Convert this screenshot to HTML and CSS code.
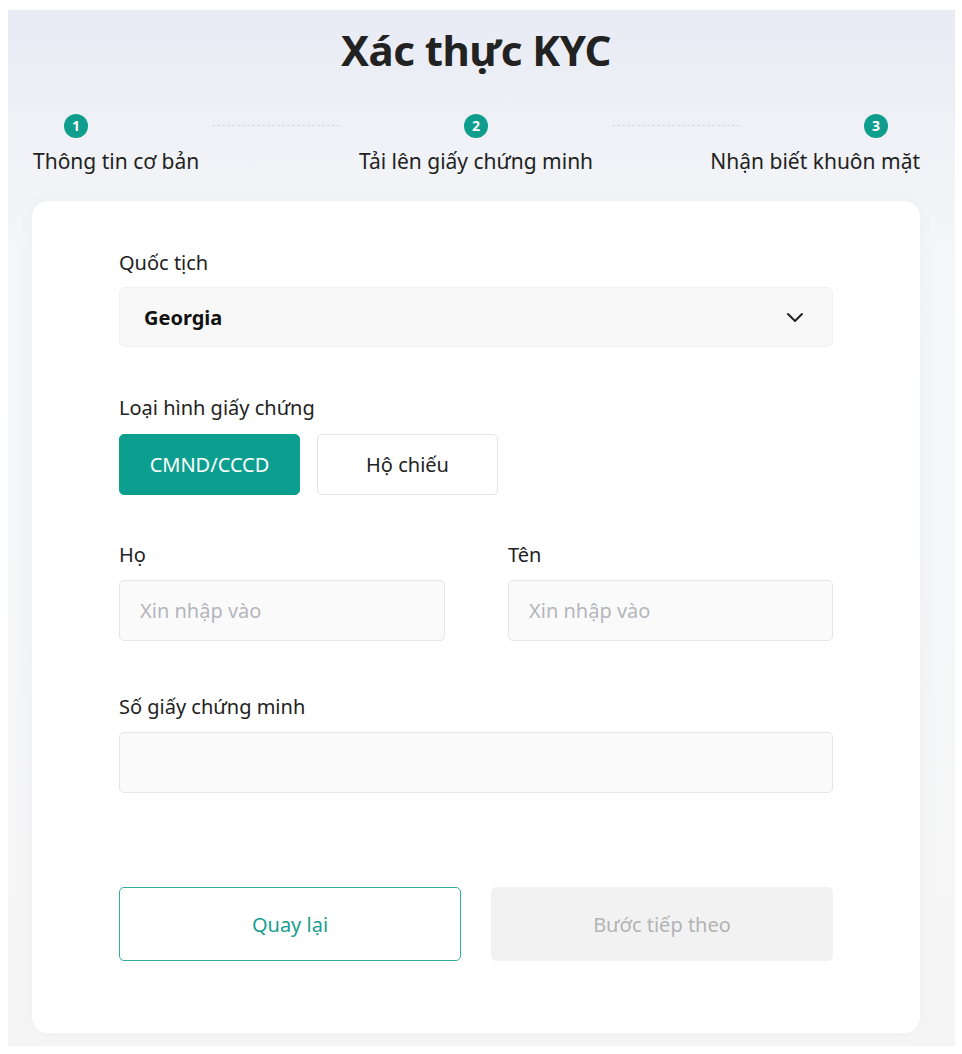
FILE: index.html
```
<!DOCTYPE html>
<html lang="vi">
<head>
<meta charset="utf-8">
<title>Xác thực KYC</title>
<link rel="stylesheet" href="styles.css">
</head>
<body>
<div class="page">
  <h1 class="title">Xác thực KYC</h1>
  <div class="steps">
    <div class="step-dots">
      <span class="dot">1</span>
      <span class="line"></span>
      <span class="dot">2</span>
      <span class="line"></span>
      <span class="dot">3</span>
    </div>
    <div class="step-labels">
      <span class="sl-first">Thông tin cơ bản</span>
      <span class="sl-mid">Tải lên giấy chứng minh</span>
      <span class="sl-last">Nhận biết khuôn mặt</span>
    </div>
  </div>
  <div class="card">
    <div class="field f-nation">
      <div class="label">Quốc tịch</div>
      <div class="select">
        <span class="select-value">Georgia</span>
        <svg class="chev" width="20" height="20" viewBox="0 0 20 20"><path d="M3 7l7 7 7-7" fill="none" stroke="#222" stroke-width="2" stroke-linecap="round" stroke-linejoin="round"/></svg>
      </div>
    </div>
    <div class="field f-type">
      <div class="label">Loại hình giấy chứng</div>
      <div class="types">
        <button class="type active">CMND/CCCD</button>
        <button class="type">Hộ chiếu</button>
      </div>
    </div>
    <div class="row f-name">
      <div class="field">
        <div class="label">Họ</div>
        <div class="input placeholder">Xin nhập vào</div>
      </div>
      <div class="field">
        <div class="label">Tên</div>
        <div class="input placeholder">Xin nhập vào</div>
      </div>
    </div>
    <div class="field f-id">
      <div class="label">Số giấy chứng minh</div>
      <div class="input"></div>
    </div>
    <div class="actions">
      <button class="btn back">Quay lại</button>
      <button class="btn next">Bước tiếp theo</button>
    </div>
  </div>
</div>
</body>
</html>
```
FILE: styles.css
```
* { box-sizing: border-box; }
html, body { margin: 0; padding: 0; background: #fff; }
body {
  font-family: "Noto Sans", "Open Sans", sans-serif;
  color: #222;
}
.page {
  margin: 10px 0 0 8px;
  width: 947px;
  height: 1036px;
  padding: 14px 35px 13px 24px;
  background: linear-gradient(180deg, #e8ebf4 0px, #f1f3f7 160px, #f5f6f7 260px, #f5f5f6 100%);
}
.title {
  margin: 0;
  font-size: 42px;
  line-height: 52px;
  font-weight: 700;
  text-align: center;
  color: #222;
  letter-spacing: -0.5px;
}
.steps { margin-top: 38px; }
.step-dots {
  display: flex;
  justify-content: center;
  align-items: center;
  gap: 124px;
  height: 24px;
}
.dot {
  width: 24px;
  height: 24px;
  border-radius: 50%;
  background: #0f9d8e;
  color: #fff;
  font-size: 14px;
  font-weight: 700;
  line-height: 24px;
  text-align: center;
}
.line {
  width: 128px;
  border-top: 1px dashed #d6d9e2;
  margin-top: -2px;
}
.step-labels {
  margin-top: 9px;
  display: grid;
  grid-template-columns: 1fr auto 1fr;
  font-size: 21px;
  line-height: 28px;
  color: #222;
}
.sl-first { justify-self: start; padding-left: 1px; }
.sl-mid { justify-self: center; }
.sl-last { justify-self: end; }
.card {
  margin-top: 26px;
  background: #fff;
  border-radius: 16px;
  padding: 48px 87px 72px;
  box-shadow: 0 0 18px rgba(0, 0, 0, 0.03);
}
.label {
  font-size: 20px;
  line-height: 28px;
  color: #222;
}
.f-nation .label { margin-bottom: 10px; }
.select {
  height: 60px;
  border-radius: 6px;
  background: #f8f8f9;
  border: 1px solid #f1f1f3;
  display: flex;
  align-items: center;
  justify-content: space-between;
  padding: 0 27px 0 24px;
}
.select-value {
  font-size: 20px;
  font-weight: 700;
  color: #111;
}
.f-type { margin-top: 47px; }
.f-type .label { margin-bottom: 12px; }
.types { display: flex; gap: 17px; }
.type {
  width: 181px;
  height: 61px;
  border-radius: 5px;
  border: 1px solid #e1e4ea;
  background: #fff;
  font-family: inherit;
  font-size: 20px;
  color: #222;
  padding: 0;
}
.type.active {
  background: #0c9f8f;
  border-color: #0c9f8f;
  color: #fff;
}
.row {
  display: grid;
  grid-template-columns: 326px 325px;
  justify-content: space-between;
}
.f-name { margin-top: 46px; }
.f-name .label, .f-id .label { margin-bottom: 11px; }
.input {
  height: 61px;
  border-radius: 5px;
  background: #fafafb;
  border: 1px solid #e4e6ee;
  padding: 0 20px;
  display: flex;
  align-items: center;
  font-size: 20px;
}
.placeholder { color: #b4b6bb; }
.f-id { margin-top: 52px; }
.actions {
  margin-top: 94px;
  display: grid;
  grid-template-columns: 342px 342px;
  justify-content: space-between;
}
.btn {
  height: 74px;
  border-radius: 5px;
  font-family: inherit;
  font-size: 20px;
  padding: 0;
}
.back {
  background: #fff;
  border: 1px solid #32aea0;
  color: #1a9e90;
}
.next {
  background: #f2f2f2;
  border: 1px solid #f2f2f2;
  color: #b3b3b3;
}
```
